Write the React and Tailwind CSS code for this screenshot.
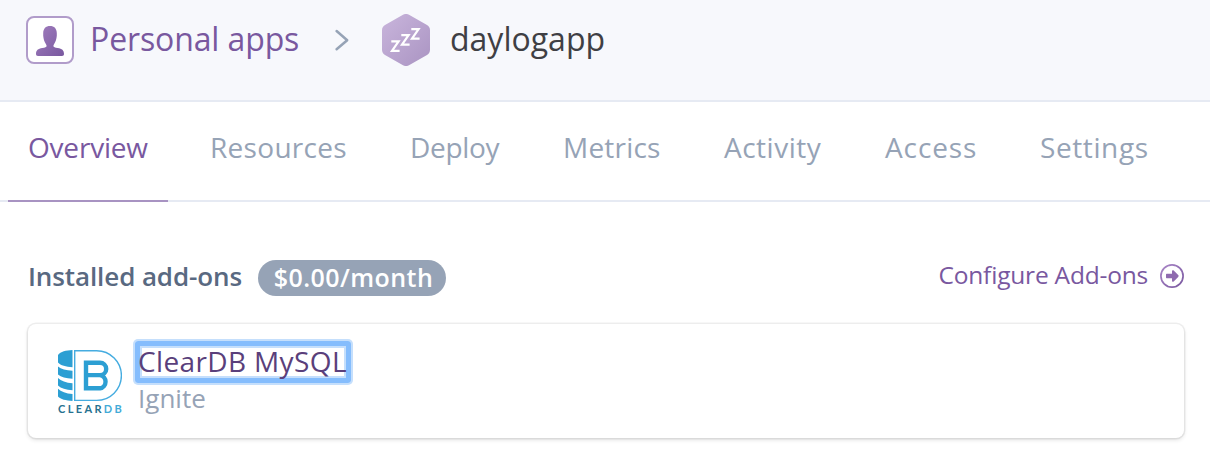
import React from "react";

const tabs = [
  { label: "Overview", width: "w-[182px]", track: "tracking-[-0.2px]", active: true },
  { label: "Resources", width: "w-[200px]", track: "tracking-[0.3px]" },
  { label: "Deploy", width: "w-[153px]", track: "tracking-[-0.3px]" },
  { label: "Metrics", width: "w-[161px]", track: "tracking-[0.2px]" },
  { label: "Activity", width: "w-[161px]", track: "tracking-[0.5px]" },
  { label: "Access", width: "w-[155px]", track: "tracking-[0.9px]" },
  { label: "Settings", width: "w-[148px]", track: "tracking-[0.6px]" },
];

function PersonIcon() {
  return (
    <svg className="h-[30px] w-7" viewBox="0 0 28 30">
      <defs>
        <linearGradient id="person" x1="0" y1="0" x2="1" y2="1">
          <stop offset="0" stopColor="#a07dbd" />
          <stop offset="1" stopColor="#79589f" />
        </linearGradient>
      </defs>
      <path
        fill="url(#person)"
        d="M14 0c4.200 0 6.800 2.600 6.800 7.200v2.600c-.3 3.200-1.100 5.900-2.500 7.900-.6.900-.9 1.500-.9 2.300 0 1.200 1.700 1.700 4.300 2.100 4.300.7 6.300 2.300 6.300 5.900 0 1.200-.7 2-2 2H2c-1.300 0-2-.8-2-2 0-3.600 2-5.200 6.300-5.900 2.600-.4 4.300-.9 4.300-2.100 0-.8-.3-1.400-.9-2.300-1.400-2-2.200-4.700-2.500-7.900V7.200C7.200 2.600 9.800 0 14 0z"
      />
    </svg>
  );
}

function SleepingApp() {
  return (
    <svg className="h-[52px] w-12 shrink-0" viewBox="0 0 48 52">
      <defs>
        <linearGradient id="hexagon" x1="0" y1="0" x2="1" y2="1">
          <stop offset="0" stopColor="#c9b5dc" />
          <stop offset="1" stopColor="#aa94c2" />
        </linearGradient>
      </defs>
      <path
        fill="url(#hexagon)"
        d="M21 .8a6 6 0 0 1 6 0L45 11a6 6 0 0 1 3 5.200v19.600a6 6 0 0 1-3 5.200L27 51.200a6 6 0 0 1-6 0L3 41a6 6 0 0 1-3-5.200V16.200A6 6 0 0 1 3 11z"
      />
      <g fill="none" stroke="#fff" strokeWidth="2.200">
        <path d="M9.300 27.400h7.300L10 36.900h7.600" />
        <path d="M19.300 21.100h7.300L20 30.600h7.600" />
        <path d="M29.300 15.100h7.300L30 24.600h7.600" />
      </g>
    </svg>
  );
}

function ClearDbLogo() {
  return (
    <svg className="mt-[26px] ml-[30px] h-16 w-16 shrink-0" viewBox="0 0 64 64">
      <g fill="#2c9fd3">
        <path d="M0 5C2.500 1.800 8 .3 14.500.1V17.200C8 17 2.500 15.600 0 12.600z" />
        <path d="M0 16.600c3 2.700 8 4 14.500 4.100v8C8 28.600 3 27.300 0 24.600z" />
        <path d="M0 28c3 3 8 4.800 14.500 5.200v7.100C8 39.900 3 38.400 0 35.500z" />
        <path d="M0 38.700c3 3 8 4.900 14.500 5.300v6.900C8 50.600 2.500 49.300 0 46.500z" />
      </g>
      <path d="M16.700.8H38.600a24.800 24.800 0 0 1 0 49.600H16.700z" fill="none" stroke="#45ace0" strokeWidth="1.400" />
      <path
        d="M28 12.700H42a6 6 0 0 1 0 12.400H28M42 25.100a6.700 6.700 0 0 1 0 13.200H28V10.600"
        fill="none"
        stroke="#2c9fd3"
        strokeWidth="4.400"
      />
      <text x="0" y="62.900" fontSize="11" fontWeight="700" fontFamily="Lato, sans-serif" textLength="63.800" lengthAdjust="spacing">
        <tspan fill="#27718f">CLEAR</tspan>
        <tspan fill="#43abd8">DB</tspan>
      </text>
    </svg>
  );
}

function ArrowCircle() {
  return (
    <svg className="h-6 w-6" viewBox="0 0 24 24">
      <defs>
        <linearGradient id="arrow" x1="0" y1="0" x2="1" y2="1">
          <stop offset="0" stopColor="#aa87c8" />
          <stop offset="1" stopColor="#79589f" />
        </linearGradient>
      </defs>
      <circle cx="12" cy="12" r="11.100" fill="none" stroke="url(#arrow)" strokeWidth="1.700" />
      <path
        fill="#8f6baf"
        d="M7 9.800h5V7.300c0-1 .9-1.500 1.700-.8l4.500 4.600c.6.600.6 1.200 0 1.800l-4.500 4.600c-.8.700-1.700.2-1.700-.8v-2.500H7c-.7 0-1-.3-1-1v-2.400c0-.7.300-1 1-1z"
      />
    </svg>
  );
}

export default function App() {
  return (
    <div className="h-[470px] w-[1210px] overflow-hidden bg-white font-['Open_Sans',sans-serif] whitespace-nowrap">
      <header className="flex h-[102px] items-start border-b-2 border-[#e6eaf3] bg-[#f7f8fc] pl-[26px]">
        <div className="mt-4 flex h-12 w-12 items-center justify-center rounded-lg border-2 border-[#b19cca] bg-white pt-px">
          <PersonIcon />
        </div>
        <a className="mt-[15px] ml-4 w-[244px] text-[32px] leading-[48px] tracking-[-0.12px] text-[#79589f]">Personal apps</a>
        <svg className="mt-[29px] h-[22px] w-[15px]" viewBox="0 0 15 22">
          <path d="M2.600 2l10.600 9.200L2.600 20.200" fill="none" stroke="#96a3b6" strokeWidth="2.500" strokeLinecap="round" strokeLinejoin="round" />
        </svg>
        <div className="mt-3.5 ml-[33px] flex">
          <SleepingApp />
        </div>
        <h1 className="mt-[15px] ml-5 text-[32px] leading-[48px] text-[#3f3f44]">daylogapp</h1>
      </header>
      <nav className="flex h-[100px] border-b-2 border-[#e6eaf3] pl-2 text-[28px] leading-[40px]">
        {tabs.map((t) => (
          <div key={t.label} className={t.width}>
            <div
              className={
                t.active
                  ? "h-[100px] w-40 border-b-2 border-[#a893c2] pt-[25px] pl-5 text-[#79589f]"
                  : "pt-[25px] pl-5 text-[#96a3b6]"
              }
            >
              <span className={t.track}>{t.label}</span>
            </div>
          </div>
        ))}
      </nav>
      <main className="px-7">
        <div className="flex h-[122px] items-start justify-between">
          <div className="flex pt-[58px]">
            <h2 className="mt-[-1px] w-[230px] text-[26px] leading-[34px] font-semibold tracking-[-0.1px] text-[#596981]">
              Installed add-ons
            </h2>
            <span className="flex h-9 w-[188px] items-center justify-center rounded-full bg-[#96a3b6] pb-px pl-[3px] text-[25px] font-semibold tracking-[0.45px] text-white">
              $0.00/month
            </span>
          </div>
          <a className="mr-[-2px] flex items-center pt-[58px] text-[24.500px] leading-[34px] text-[#79589f]">
            <span className="mt-[-2px] mr-3 tracking-[-0.2px]">Configure Add-ons</span>
            <ArrowCircle />
          </a>
        </div>
        <section className="mr-[-2px] flex h-[114px] w-[1156px] rounded-lg bg-white shadow-[0_0_0_1.500px_rgba(0,0,0,0.06),0_2px_4px_rgba(0,0,0,0.12)]">
          <ClearDbLogo />
          <div className="mt-5 ml-4">
            <a className="relative block h-[35px] text-[28px] leading-[35px] tracking-[0.37px] text-[#5a3f7b]">
              <span className="absolute top-[-3px] left-[-3px] h-[42px] w-[216px] rounded-[3px] border-[5px] border-[#85bdfd] shadow-[inset_0_0_0_2px_#c5dffc,0_0_0_2px_#c5dffc]" />
              <span className="relative">ClearDB MySQL</span>
            </a>
            <p className="mt-px text-[26px] leading-[36px] text-[#96a3b6]">Ignite</p>
          </div>
        </section>
      </main>
    </div>
  );
}
